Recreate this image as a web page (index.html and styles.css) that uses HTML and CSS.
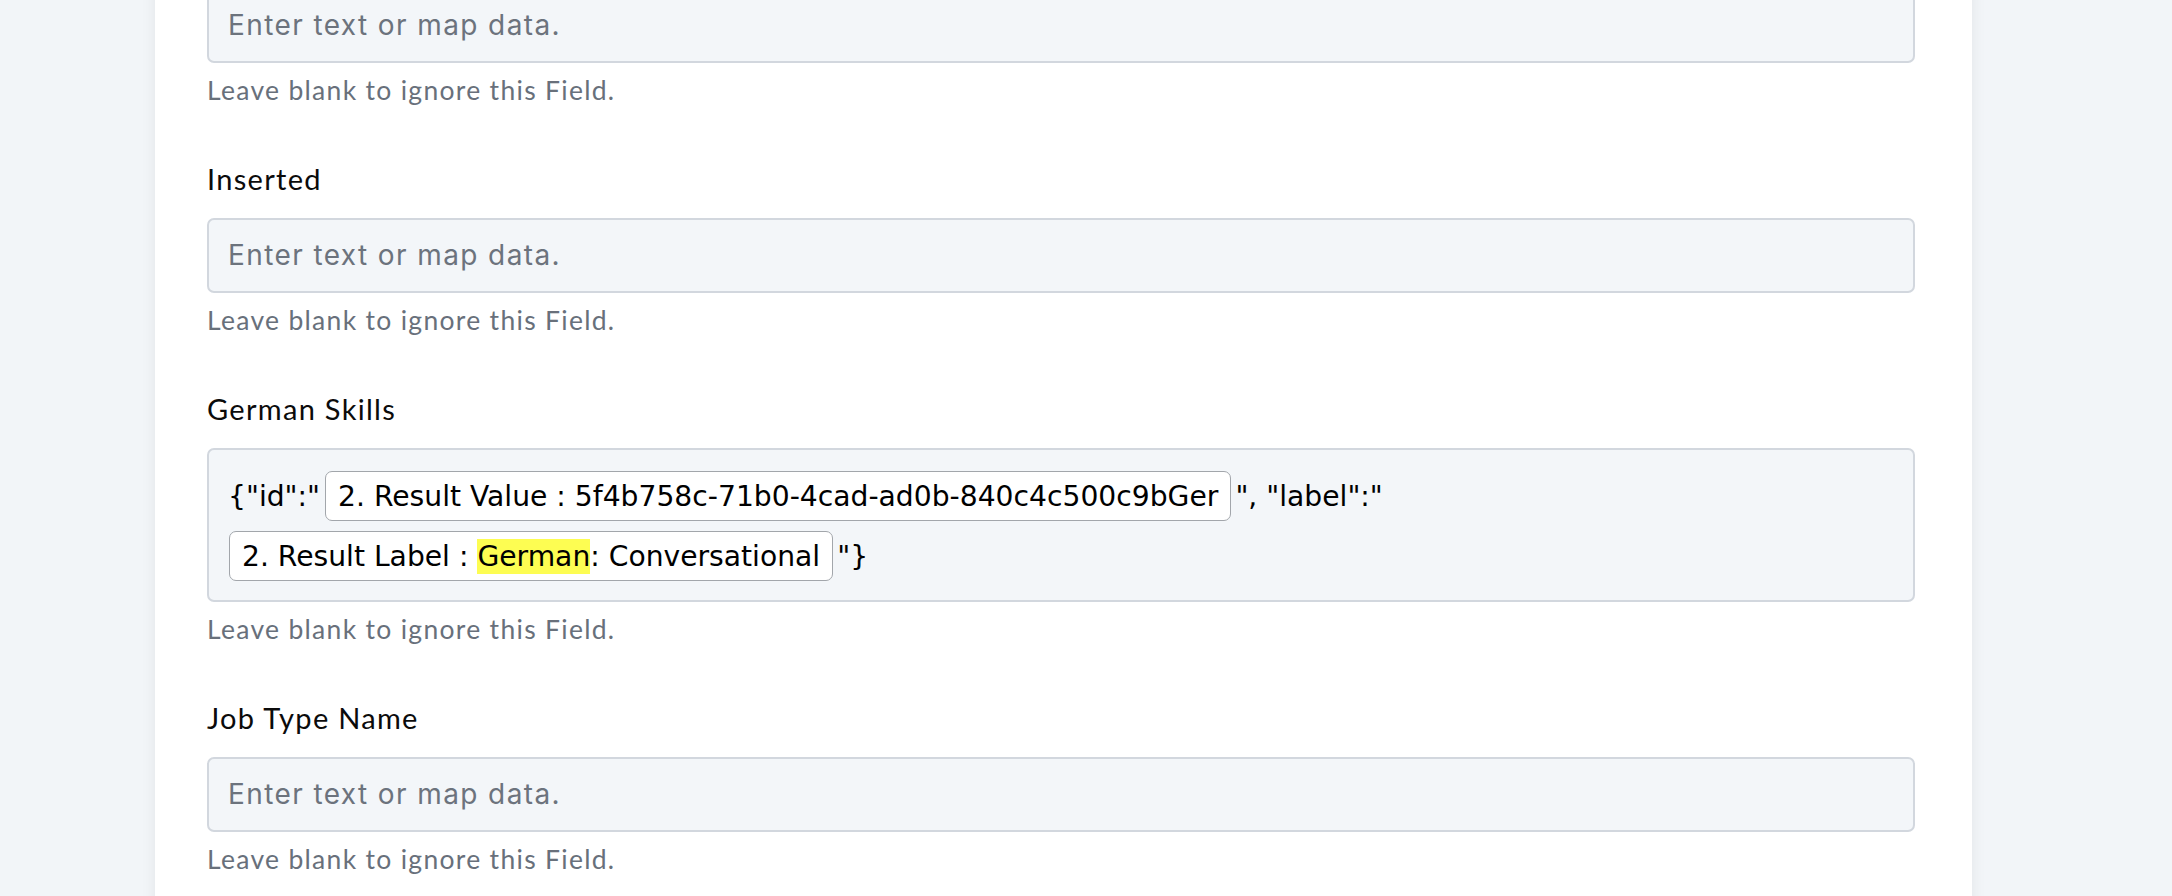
FILE: index.html
```html
<html><head>
<meta charset="utf-8">
<meta name="viewport" content="width=device-width, initial-scale=1">
<title>Field Mapping</title>
<link rel="stylesheet" href="styles.css">
</head>
<body>
  <div class="panel">
    <div class="field">
      <div class="input placeholder">Enter text or map data.</div>
      <p class="hint">Leave blank to ignore this Field.</p>
    </div>

    <div class="field">
      <label class="label">Inserted</label>
      <div class="input placeholder">Enter text or map data.</div>
      <p class="hint">Leave blank to ignore this Field.</p>
    </div>

    <div class="field">
      <label class="label">German Skills</label>
      <div class="input mapped">
        <span class="raw">{"id":"</span>
        <span class="token">2. Result Value : 5f4b758c-71b0-4cad-ad0b-840c4c500c9bGer</span>
        <span class="raw">", "label":"</span>
        <span class="token">2. Result Label : <mark>German</mark>: Conversational</span>
        <span class="raw">"}</span>
      </div>
      <p class="hint">Leave blank to ignore this Field.</p>
    </div>

    <div class="field">
      <label class="label">Job Type Name</label>
      <div class="input placeholder">Enter text or map data.</div>
      <p class="hint">Leave blank to ignore this Field.</p>
    </div>
  </div>
</body>
</html>
```

FILE: styles.css
```css
body, html {
  margin: 0;
  padding: 0;
  background-color: #f2f5f8;
  overflow: hidden;
}
.panel {
  width: 1817px;
  margin: -12px 0 0 155px;
  padding: 0 57px 80px 52px;
  box-sizing: border-box;
  background-color: #fff;
  box-shadow: 0 0 14px rgba(0,0,0,0.07);
  display: flex;
  flex-direction: column;
  gap: 55px;
}
.field {
  display: flex;
  flex-direction: column;
}
.label {
  font-family: 'Lato', sans-serif;
  font-size: 29px;
  line-height: 36px;
  letter-spacing: 1.3px;
  color: #0b0b0b;
  margin-bottom: 21px;
}
.input {
  box-sizing: border-box;
  background-color: #f3f6f9;
  border: 2px solid #d2d7de;
  border-radius: 7px;
}
.placeholder {
  height: 75px;
  line-height: 71px;
  padding-left: 19px;
  font-family: 'Inter', sans-serif;
  font-size: 28px;
  letter-spacing: 1.4px;
  color: #6c737d;
}
.mapped {
  display: flex;
  flex-wrap: wrap;
  align-items: center;
  column-gap: 4px;
  row-gap: 10px;
  padding: 21px 20px 19px 19px;
  font-family: 'DejaVu Sans', sans-serif;
  font-size: 28.2px;
  color: #000;
}
.token {
  display: inline-flex;
  align-items: center;
  height: 50px;
  box-sizing: border-box;
  padding: 0 12px;
  background-color: #fff;
  border: 1.5px solid #a2a6ab;
  border-radius: 7px;
  white-space: pre;
}
.raw + .token {
  margin-left: 1px;
}
.token mark {
  background-color: #fdfd52;
  color: #000;
  padding: 1px 0;
}
.hint {
  margin: 11px 0 0 0;
  font-family: 'Lato', sans-serif;
  font-size: 26.5px;
  line-height: 32px;
  letter-spacing: 1.3px;
  color: #68707b;
}
```
